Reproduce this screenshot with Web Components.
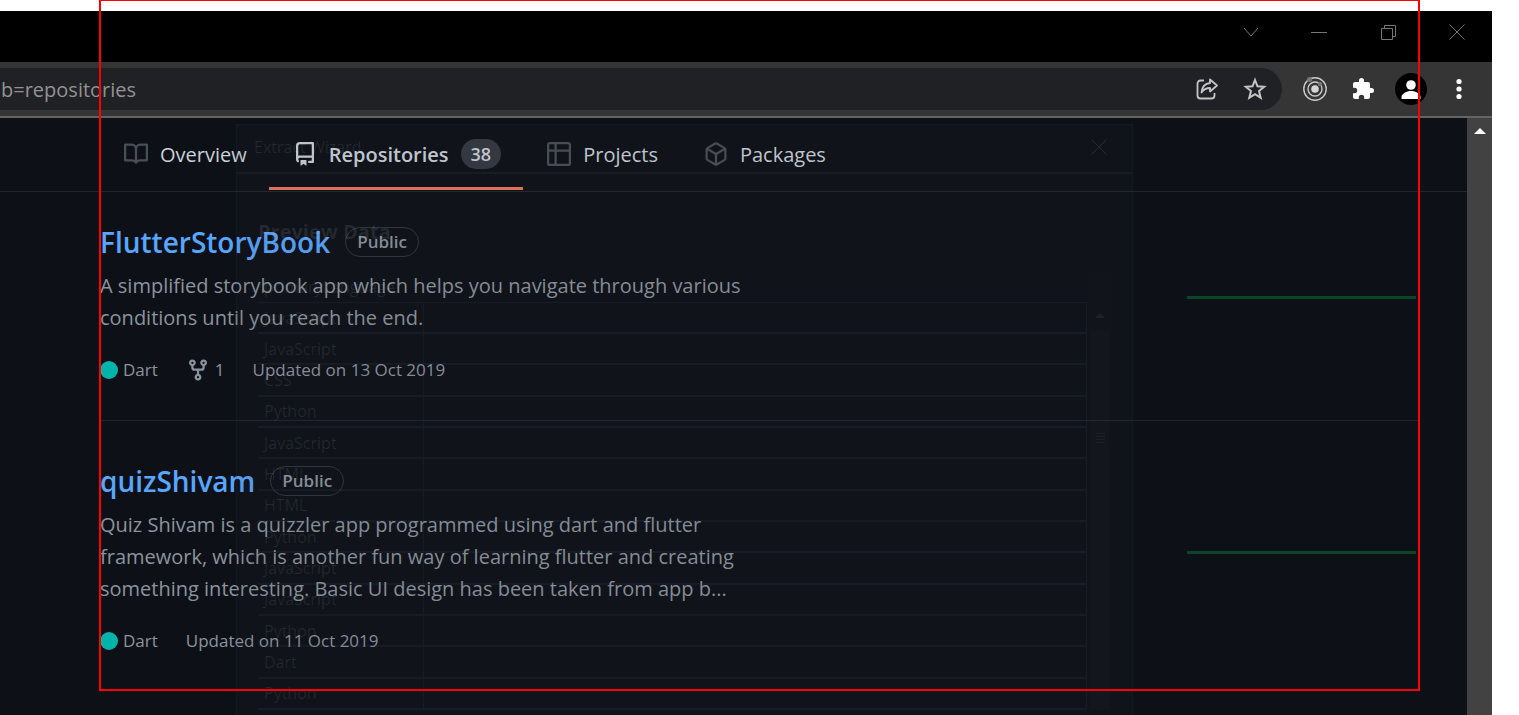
<!DOCTYPE html>
<html lang="en">
<head>
<meta charset="utf-8">
<title>Repositories</title>
<style>
  html { background: #fff; }
  body { margin: 0; font-family: "Open Sans", "Noto Sans", sans-serif; font-size: 20px; }
</style>
</head>
<body>
<browser-shot></browser-shot>

<script>
const define = (name, html, setup) => {
  const tpl = document.createElement('template');
  tpl.innerHTML = html;
  customElements.define(name, class extends HTMLElement {
    connectedCallback() {
      if (this.shadowRoot) return;
      this.attachShadow({ mode: 'open' }).append(tpl.content.cloneNode(true));
      if (setup) setup(this, this.shadowRoot);
    }
  });
};

/* Window caption buttons */
define('title-bar', `
<style>
  :host { display: flex; justify-content: flex-end; align-items: flex-start; height: 51px; padding-right: 1px; box-sizing: border-box; background: #000; }
  button { width: 69px; height: 42px; padding: 0; border: 0; background: none; color: #777; display: grid; place-items: center; }
  svg { width: 16px; height: 16px; fill: none; stroke: currentColor; }
</style>
<button aria-label="Search tabs"><svg viewBox="0 0 16 16"><path d="M2 4l7 8 7-8"/></svg></button>
<button aria-label="Minimize"><svg viewBox="0 0 16 16"><path d="M0 8.500h16"/></svg></button>
<button aria-label="Restore"><svg viewBox="0 0 16 16"><path d="M1.500 4.500h11v11h-11zM4.500 4V1.500h11v11H13"/></svg></button>
<button aria-label="Close"><svg viewBox="0 0 16 16"><path d="M.5.5l15 15M15.500.5l-15 15"/></svg></button>`);

define('tool-bar', `
<style>
  :host { display: flex; align-items: center; gap: 16px; box-sizing: border-box; height: 56px; padding-right: 17px;
    background: #353535; border-bottom: 2px solid #646464; }
  form { flex: 1; min-width: 0; height: 42px; display: flex; align-items: center; gap: 16px; padding-right: 11px; margin-right: 1px;
    background: #202124; border-radius: 0 21px 21px 0; }
  input { flex: 1; min-width: 0; border: 0; padding: 0 0 0 1px; background: none; outline: 0; color: #929292; font: inherit; }
  button { flex: none; width: 32px; height: 32px; padding: 0; border: 0; background: none; color: #c4c4c4; display: grid; place-items: center; border-radius: 50%; }
  button.on { color: #fff; }
  button.me { background: #000; }
  svg { width: 24px; height: 24px; display: block; }
  .me svg { width: 32px; height: 32px; }
</style>
<form>
  <input aria-label="Address" value="b=repositories" readonly>
  <button type="button" aria-label="Share"><svg viewBox="0 0 24 24" fill="none" stroke="currentColor" stroke-width="1.800" stroke-linejoin="round"><path d="M9 3.500H5.500a3 3 0 0 0-3 3v12a3 3 0 0 0 3 3h11a3 3 0 0 0 3-3V16"/><path d="M15 2.500l7 6-7 6V11c-4 0-6.500 1.500-8.500 4.500C7 10.500 9.500 6.500 15 6z"/></svg></button>
  <button type="button" aria-label="Bookmark"><svg viewBox="0 0 24 24" fill="none" stroke="currentColor" stroke-width="2"><path d="M12 3l2.500 6.300 6.700.5-5.200 4.300 1.700 6.600-5.700-3.600-5.700 3.600L8 14.100 2.800 9.800l6.700-.5z"/></svg></button>
</form>
<button aria-label="Recorder extension"><svg viewBox="0 0 24 24" fill="none" stroke="#c8c8c8" stroke-width="1.400"><circle cx="12" cy="12" r="11.200"/><circle cx="12" cy="12" r="7"/><circle cx="12" cy="12" r="3.800" fill="#d4d4d4" stroke="none"/><circle cx="6.500" cy="2.500" r="2.500" fill="#777" stroke="none"/><circle cx="17" cy="7" r="2.200" fill="#777" stroke="none"/></svg></button>
<button class="on" aria-label="Extensions"><svg viewBox="0 0 24 24" fill="currentColor"><path d="M20.500 11H19V7a2 2 0 0 0-2-2h-4V3.500a2.500 2.500 0 0 0-5 0V5H4a2 2 0 0 0-2 2v3.800h1.500a2.700 2.700 0 0 1 0 5.400H2V20a2 2 0 0 0 2 2h3.800v-1.500a2.700 2.700 0 0 1 5.400 0V22H17a2 2 0 0 0 2-2v-4h1.500a2.500 2.500 0 0 0 0-5z"/></svg></button>
<button class="on me" aria-label="Profile"><svg viewBox="0 0 32 32" fill="currentColor"><circle cx="16" cy="12" r="4.800"/><path d="M6.500 26v-2c0-3.300 5-6 9.500-6s9.500 2.700 9.500 6v2z"/></svg></button>
<button class="on" aria-label="Menu"><svg viewBox="0 0 24 24" fill="currentColor"><circle cx="12" cy="4.500" r="2.600"/><circle cx="12" cy="12" r="2.600"/><circle cx="12" cy="19.500" r="2.600"/></svg></button>`);

define('nav-tab', `
<style>
  :host { display: block; }
  a { display: flex; align-items: center; gap: 12px; height: 72px; padding: 0 22px 0 24px; color: #c9d1d9; text-decoration: none; box-sizing: border-box; }
  svg { width: 24px; height: 24px; fill: #484f58; flex: none; }
  :host([current]) a { font-weight: 600; box-shadow: inset 0 -3px #ec775c; }
  :host([current]) svg { fill: #c9d1d9; }
  .count { height: 30px; padding: 0 10px; border-radius: 15px; background: #343941; font-size: 18px; line-height: 30px; font-weight: 600; }
  .count[hidden] { display: none; }
</style>
<a href="#"><svg viewBox="0 0 16 16" aria-hidden="true"><path fill-rule="evenodd"/></svg><slot></slot><span class="count" hidden></span></a>`,
(el, root) => {
  root.querySelector('path').setAttribute('d', {
    book: 'M0 1.750A.75.75 0 01.75 1h4.253c1.227 0 2.317.59 3 1.501A3.744 3.744 0 0111.006 1h4.245a.75.75 0 01.75.75v10.500a.75.75 0 01-.75.75h-4.507a2.250 2.250 0 00-1.591.659l-.622.621a.75.75 0 01-1.060 0l-.622-.621A2.250 2.250 0 005.258 13H.75a.75.75 0 01-.75-.75V1.750zm8.755 3a2.250 2.250 0 012.250-2.250H14.500v9h-3.757c-.71 0-1.400.201-1.992.572l.004-7.322zm-1.504 7.324l.004-5.073-.002-2.253A2.250 2.250 0 005.003 2.500H1.500v9h3.757a3.750 3.750 0 011.994.574z',
    repo: 'M2 2.500A2.500 2.500 0 014.500 0h8.750a.75.75 0 01.75.75v12.500a.75.75 0 01-.75.75h-2.500a.75.75 0 110-1.500h1.750v-2h-8a1 1 0 00-.714 1.700.75.75 0 01-1.072 1.050A2.495 2.495 0 012 11.500v-9zm10.500-1V9h-8c-.356 0-.694.074-1 .208V2.500a1 1 0 011-1h8zM5 12.250v3.250a.25.25 0 00.4.2l1.450-1.087a.25.25 0 01.3 0L8.600 15.700a.25.25 0 00.4-.2v-3.250a.25.25 0 00-.25-.25h-3.500a.25.25 0 00-.25.25z',
    table: 'M0 1.750C0 .784.784 0 1.750 0h12.500C15.216 0 16 .784 16 1.750v12.500A1.750 1.750 0 0114.250 16H1.750A1.750 1.750 0 010 14.250V1.750zm1.750-.25a.25.25 0 00-.25.25V5H5V1.500zM6.500 1.500V5h8V1.750a.25.25 0 00-.25-.25zM14.500 6.500h-8v8h7.750a.25.25 0 00.25-.25zM5 14.500v-8H1.500v7.750c0 .138.112.25.25.25z',
    package: 'M8.878.392a1.750 1.750 0 00-1.756 0l-5.250 3.045A1.750 1.750 0 001 4.951v6.098c0 .624.332 1.200.872 1.514l5.250 3.045a1.750 1.750 0 001.756 0l5.250-3.045c.54-.313.872-.89.872-1.514V4.951c0-.624-.332-1.200-.872-1.514L8.878.392zM7.875 1.690a.25.25 0 01.25 0l4.630 2.685L8 7.133 3.245 4.375l4.630-2.685zM2.500 5.677v5.372c0 .09.047.171.125.216l4.625 2.683V8.432L2.500 5.677zm6.250 8.271l4.625-2.683a.25.25 0 00.125-.216V5.677L8.750 8.432v5.516z'
  }[el.getAttribute('icon')]);
  if (el.hasAttribute('count')) {
    const c = root.querySelector('.count');
    c.textContent = el.getAttribute('count');
    c.hidden = false;
  }
});

define('repo-item', `
<style>
  :host { display: flex; justify-content: space-between; align-items: center; gap: 24px; color: #8b949e; }
  .text { flex: 0 1 656px; min-width: 0; }
  .head { display: flex; align-items: center; gap: 15px; height: 30px; }
  h3 { margin: 0; font-size: 28px; line-height: 30px; font-weight: 600; }
  a { color: #58a6ff; text-decoration: none; }
  .pill { box-sizing: border-box; height: 30px; line-height: 28px; padding: 0 11px; border: 1px solid #30363d; border-radius: 15px; font-size: 17px; font-weight: 600; }
  p { margin: 13px 0 23px; line-height: 32px; }
  .meta { display: flex; align-items: center; gap: 28px; height: 26px; line-height: 26px; font-size: 17px; }
  .meta span { display: flex; align-items: center; gap: 5px; }
  i { width: 18px; height: 18px; border-radius: 50%; background: #00b4ab; }
  svg { width: 24px; height: 24px; fill: #8b949e; }
  b { font-weight: 400; }
  .forks[hidden] { display: none; }
  .graph { flex: 0 0 229px; height: 3px; background: #0c4525; margin: 0 3px 16px 0; }
</style>
<div class="text">
  <div class="head"><h3><a href="#"></a></h3><span class="pill">Public</span></div>
  <p><slot></slot></p>
  <div class="meta"><span><i></i>Dart</span><span class="forks" hidden><svg viewBox="0 0 16 16" aria-hidden="true"><path fill-rule="evenodd" d="M5 3.250a.75.75 0 11-1.500 0 .75.75 0 011.500 0zm0 2.122a2.250 2.250 0 10-1.500 0v.878A2.250 2.250 0 005.750 8.500h1.500v2.128a2.251 2.251 0 101.500 0V8.500h1.500a2.250 2.250 0 002.250-2.250v-.878a2.250 2.250 0 10-1.500 0v.878a.75.75 0 01-.75.75h-4.500A.75.75 0 015 6.250v-.878zm3.750 7.378a.75.75 0 11-1.500 0 .75.75 0 011.500 0zm3-8.750a.75.75 0 100-1.500.75.75 0 000 1.500z"/></svg><b></b></span><span class="date"></span></div>
</div>
<div class="graph"></div>`,
(el, root) => {
  root.querySelector('a').textContent = el.getAttribute('name');
  root.querySelector('.date').textContent = el.getAttribute('updated');
  if (el.hasAttribute('forks')) {
    root.querySelector('.forks').hidden = false;
    root.querySelector('b').textContent = el.getAttribute('forks');
  }
});

/* Translucent dialog fading in above the page */
define('extract-wizard', `
<style>
  :host { display: block; box-sizing: border-box; overflow: hidden; pointer-events: none; color: rgba(255,255,255,.09);
    background: rgba(60,56,66,.08); border: 1px solid rgba(20,70,120,.14); border-bottom: 0; font-size: 16px; }
  header { display: flex; align-items: center; justify-content: space-between; height: 43px; padding: 0 25px 4px 17px; border-bottom: 2px solid rgba(255,255,255,.035); }
  svg { width: 16px; height: 16px; stroke: rgba(255,255,255,.1); }
  h2 { margin: 43px 0 25px 21px; font-size: 20px; line-height: 30px; font-weight: 700; }
  .wrap { display: flex; margin: 0 19px 0 21px; }
  table { flex: 1; border-collapse: collapse; table-layout: fixed; height: 438px; }
  th, td { padding: 0 6px; text-align: left; font-weight: 400; line-height: 20px; border: 1px solid rgba(60,110,140,.11); border-left: 0; border-top: 0; }
  th { border-right: 0; font-weight: 500; height: 30px; }
  td { border-bottom-width: 2px; }
  th:first-child { width: 153px; }
  .bar { flex: 0 0 26px; display: flex; flex-direction: column; align-items: center; background: rgba(255,255,255,.008); padding-top: 41px; box-sizing: border-box; }
  .up { border: 5px solid transparent; border-top: 0; border-bottom-color: rgba(255,255,255,.06); margin-bottom: 12px; }
  .thumb { flex: 1; width: 18px; background: rgba(255,255,255,.01); display: flex; flex-direction: column; align-items: center; gap: 2px; padding-top: 103px; }
  .thumb i { width: 9px; height: 1px; background: rgba(255,255,255,.04); }
</style>
<header><span>Extract Wizard</span><svg viewBox="0 0 16 16"><path d="M.5.5l15 15M15.500.5l-15 15"/></svg></header>
<h2>Preview Data</h2>
<div class="wrap">
  <table><thead><tr><th>primaryLanguage</th><th></th></tr></thead><tbody></tbody></table>
  <div class="bar"><div class="up"></div><div class="thumb"><i></i><i></i><i></i><i></i></div></div>
</div>`,
(el, root) => {
  const body = root.querySelector('tbody');
  for (const lang of ['JavaScript', 'JavaScript', 'CSS', 'Python', 'JavaScript', 'HTML', 'HTML', 'Python', 'JavaScript', 'JavaScript', 'Python', 'Dart', 'Python']) {
    const row = body.insertRow();
    row.insertCell().textContent = lang;
    row.insertCell();
  }
});

define('scroll-bar', `
<style>
  :host { display: block; flex: 0 0 25px; background: #424242; }
  button { width: 25px; height: 26px; padding: 0; border: 0; background: none; display: grid; place-items: center; }
  i { border: 6px solid transparent; border-top: 0; border-bottom-color: #fff; }
</style>
<button aria-label="Scroll up"><i></i></button>`);

define('browser-shot', `
<style>
  :host { display: flex; flex-direction: column; position: relative; box-sizing: border-box; height: 100vh; overflow: hidden; padding: 11px 27px 0 0; }
  title-bar, tool-bar { flex: none; }
  .view { flex: 1; min-height: 0; display: flex; background: #0d1117; }
  .page { flex: 1; min-width: 0; position: relative; overflow: hidden; }
  nav { display: flex; padding-left: 100px; height: 73px; border-bottom: 1px solid #21262d; }
  main { padding: 35px 48px 0 100px; }
  hr { border: 0; height: 1px; background: #21262d; margin: 37px 0 45px; }
  extract-wizard { position: absolute; inset: 6px 334px 0 236px; }
  .selection { position: absolute; inset: -1px 99px 24px 99px; border: 2px solid #f00; pointer-events: none; }
</style>
<title-bar></title-bar>
<tool-bar></tool-bar>
<div class="view">
  <div class="page">
    <nav>
      <nav-tab icon="book">Overview</nav-tab>
      <nav-tab icon="repo" count="38" current>Repositories</nav-tab>
      <nav-tab icon="table">Projects</nav-tab>
      <nav-tab icon="package">Packages</nav-tab>
    </nav>
    <main>
      <repo-item name="FlutterStoryBook" forks="1" updated="Updated on 13 Oct 2019">A simplified storybook app which helps you navigate through various conditions until you reach the end.</repo-item>
      <hr>
      <repo-item name="quizShivam" updated="Updated on 11 Oct 2019">Quiz Shivam is a quizzler app programmed using dart and flutter framework, which is another fun way of learning flutter and creating something interesting. Basic UI design has been taken from app b...</repo-item>
    </main>
    <extract-wizard></extract-wizard>
  </div>
  <scroll-bar></scroll-bar>
</div>
<div class="selection"></div>`);
</script>
</body>
</html>
